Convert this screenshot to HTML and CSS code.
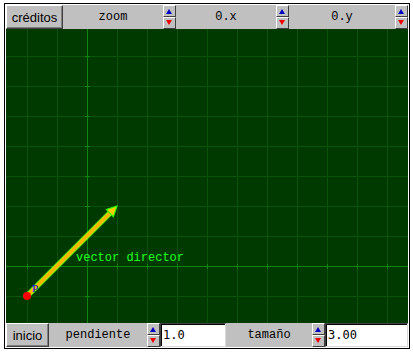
FILE: index.html
```html
<!DOCTYPE html>
<html lang="es">
<head>
  <meta charset="UTF-8">
  <title>vector director</title>
  <link rel="stylesheet" href="styles.css">
</head>
<body>
  <div class="applet">
    <div class="bar">
      <button class="btn btn-creditos">créditos</button>
      <div class="ctl">
        <span class="lbl">zoom</span>
        <div class="spin"><span class="up"></span><span class="dn"></span></div>
      </div>
      <div class="ctl">
        <span class="lbl">0.x</span>
        <div class="spin"><span class="up"></span><span class="dn"></span></div>
      </div>
      <div class="ctl grow">
        <span class="lbl">0.y</span>
        <div class="spin"><span class="up"></span><span class="dn"></span></div>
      </div>
    </div>

    <svg class="canvas" width="402" height="294" viewBox="0 0 402 294">
      <g class="grid">
        <line x1="21.5" y1="0" x2="21.5" y2="294"/>
        <line x1="51.5" y1="0" x2="51.5" y2="294"/>
        <line x1="111.5" y1="0" x2="111.5" y2="294"/>
        <line x1="141.5" y1="0" x2="141.5" y2="294"/>
        <line x1="171.5" y1="0" x2="171.5" y2="294"/>
        <line x1="201.5" y1="0" x2="201.5" y2="294"/>
        <line x1="231.5" y1="0" x2="231.5" y2="294"/>
        <line x1="261.5" y1="0" x2="261.5" y2="294"/>
        <line x1="291.5" y1="0" x2="291.5" y2="294"/>
        <line x1="321.5" y1="0" x2="321.5" y2="294"/>
        <line x1="351.5" y1="0" x2="351.5" y2="294"/>
        <line x1="381.5" y1="0" x2="381.5" y2="294"/>
        <line x1="0" y1="27.5" x2="402" y2="27.5"/>
        <line x1="0" y1="57.5" x2="402" y2="57.5"/>
        <line x1="0" y1="87.5" x2="402" y2="87.5"/>
        <line x1="0" y1="117.5" x2="402" y2="117.5"/>
        <line x1="0" y1="147.5" x2="402" y2="147.5"/>
        <line x1="0" y1="177.5" x2="402" y2="177.5"/>
        <line x1="0" y1="207.5" x2="402" y2="207.5"/>
        <line x1="0" y1="267.5" x2="402" y2="267.5"/>
      </g>
      <g class="axis">
        <line x1="81.5" y1="0" x2="81.5" y2="294"/>
        <line x1="0" y1="237.5" x2="402" y2="237.5"/>
        <!-- marcas -->
        <path d="M79 27.5h5M79 57.5h5M79 87.5h5M79 117.5h5M79 147.5h5M79 177.5h5M79 207.5h5M79 267.5h5"/>
        <path d="M21.5 235v5M51.5 235v5M111.5 235v5M141.5 235v5M171.5 235v5M201.5 235v5M231.5 235v5M261.5 235v5M291.5 235v5M321.5 235v5M351.5 235v5M381.5 235v5"/>
      </g>
      <line class="vec-edge" x1="21" y1="267" x2="106" y2="182"/>
      <line class="vec" x1="21" y1="267" x2="106" y2="182"/>
      <polygon class="head" points="111,177 100.4,180.6 107.4,187.6"/>
      <text class="vec-label" x="70" y="232">vector director</text>
      <text class="p-label" x="26" y="263">P</text>
      <circle class="pt" cx="21" cy="267" r="4"/>
    </svg>

    <div class="bar">
      <button class="btn btn-inicio">inicio</button>
      <div class="ctl ctl-auto">
        <span class="lbl lbl-pend">pendiente</span>
        <div class="spin"><span class="up"></span><span class="dn"></span></div>
        <input class="field field-pend" type="text" value="1.0">
      </div>
      <div class="ctl grow">
        <span class="lbl lbl-tam">tamaño</span>
        <div class="spin"><span class="up"></span><span class="dn"></span></div>
        <input class="field grow" type="text" value="3.00">
      </div>
    </div>
  </div>
</body>
</html>
```

FILE: styles.css
```css
body {
  margin: 0;
  background-color: #fff;
}
.applet {
  margin: 3px 0 0 4px;
  width: 402px;
  height: 342px;
  padding: 1px;
  border: 1px solid #000;
  display: flex;
  flex-direction: column;
  background-color: #fff;
}
.bar {
  display: flex;
  height: 24px;
  background-color: #c0c0c0;
}
.btn {
  box-sizing: border-box;
  flex-shrink: 0;
  height: 24px;
  margin: 0;
  padding: 0;
  font-family: "Liberation Sans", Arial, sans-serif;
  font-size: 13px;
  color: #000;
  background-color: #c0c0c0;
  border: 1px solid;
  border-color: #fff #404040 #404040 #fff;
  box-shadow: inset -1px -1px 0 #808080;
}
.btn-creditos {
  width: 57px;
}
.btn-inicio {
  width: 43px;
}
.ctl {
  display: flex;
  width: 113px;
}
.ctl.ctl-auto {
  width: auto;
}
.ctl.grow {
  flex: 1;
  min-width: 0;
}
.lbl {
  flex: 1;
  display: flex;
  align-items: center;
  justify-content: center;
  font-family: "Liberation Mono", "Courier New", monospace;
  font-size: 12px;
  color: #000;
}
.lbl-pend {
  flex: none;
  width: 98px;
}
.lbl-tam {
  flex: none;
  width: 86px;
}
.spin {
  display: flex;
  flex-direction: column;
  flex-shrink: 0;
  width: 13px;
}
.spin span {
  box-sizing: border-box;
  position: relative;
  height: 12px;
  background-color: #c0c0c0;
  border: 1px solid;
  border-color: #fff #404040 #404040 #fff;
}
.spin span::after {
  content: "";
  position: absolute;
  left: 2px;
  width: 0;
  height: 0;
  border-left: 3.5px solid transparent;
  border-right: 3.5px solid transparent;
}
.spin .up::after {
  top: 3px;
  border-bottom: 5px solid #0000c0;
}
.spin .dn::after {
  top: 2px;
  border-top: 5px solid #f00000;
}
.field {
  box-sizing: border-box;
  flex-shrink: 0;
  width: 66px;
  height: 24px;
  margin: 0;
  padding: 0 0 0 2px;
  font-family: "DejaVu Sans Mono", "Liberation Mono", monospace;
  font-size: 12px;
  color: #000;
  background-color: #fff;
  border: 1px solid;
  border-color: #404040 #d8d8d8 #d8d8d8 #404040;
  box-shadow: inset 1px 1px 0 #000;
  outline: none;
}
.field.grow {
  flex: 1;
  width: auto;
  min-width: 0;
}
.canvas {
  display: block;
  background-color: #003a00;
}
.grid line {
  stroke: #095209;
  stroke-width: 1;
}
.axis line,
.axis path {
  stroke: #108410;
  stroke-width: 1;
  fill: none;
}
.vec-edge {
  stroke: #66ff00;
  stroke-width: 5.5;
}
.vec {
  stroke: #ffb400;
  stroke-width: 3.5;
}
.head {
  fill: #ffcc00;
  stroke: #33ff00;
  stroke-width: 1.2;
}
.vec-label {
  font-family: "Liberation Mono", "Courier New", monospace;
  font-size: 12px;
  fill: #22ff22;
}
.p-label {
  font-family: "Liberation Serif", "Times New Roman", serif;
  font-size: 11px;
  fill: #0000ff;
}
.pt {
  fill: #ff0000;
}
```
